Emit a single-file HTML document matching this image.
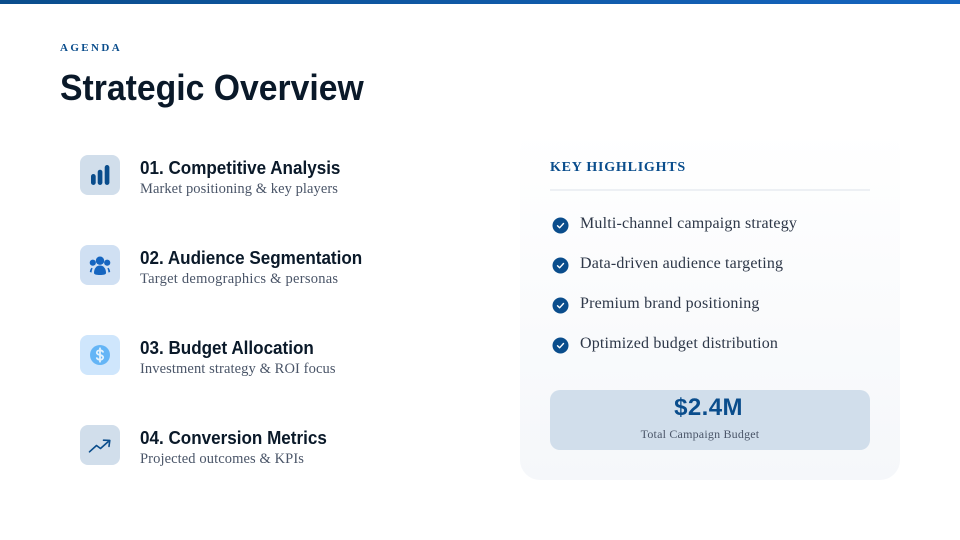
<!DOCTYPE html>
<html>
<head>
<meta charset="utf-8">
<style>
html,body{margin:0;padding:0;background:#fff}
#s{position:relative;width:960px;height:540px;overflow:hidden;background:#fff}
#s div{position:absolute;white-space:nowrap}
.sans{font-family:"Liberation Sans",sans-serif}
.serif{font-family:"Liberation Serif",serif}
.ic{left:80px;width:40px;height:40px;border-radius:8px}
.ic svg{position:absolute;left:0;top:0}
.t{left:140px;font-family:"Liberation Sans",sans-serif;font-weight:700;font-size:18px;line-height:22px;color:#0a1929;transform:scaleX(.948);transform-origin:0 0}
.d{left:140px;font-family:"Liberation Serif",serif;font-size:14.5px;line-height:18px;color:#4a5568}
.li{left:580px;font-family:"Liberation Serif",serif;font-size:16px;letter-spacing:.18px;line-height:20px;color:#2d3748}
.ck{left:552px;width:17px;height:17px}
</style>
</head>
<body>
<div id="s">
<div style="left:0;top:0;width:960px;height:4px;background:linear-gradient(90deg,#0a4d8c,#1565c0)"></div>
<div class="serif" style="left:60px;top:41px;font-size:11px;line-height:14px;font-weight:700;letter-spacing:2.4px;color:#0a4d8c">AGENDA</div>
<div class="sans" style="left:60px;top:66px;font-size:36px;line-height:44px;font-weight:700;color:#0a1929;transform:scaleX(.937);transform-origin:0 0">Strategic Overview</div>

<div class="ic" style="top:155px;background:#d1deeb"><svg width="40" height="40" viewBox="0 0 40 40"><g fill="#0a4d8c"><rect x="11" y="19" width="4.700" height="11" rx="2.350"/><rect x="17.700" y="14.700" width="4.700" height="15.300" rx="2.350"/><rect x="24.700" y="10" width="4.700" height="20" rx="2.350"/></g></svg></div>
<div class="t" style="top:157px">01. Competitive Analysis</div>
<div class="d" style="top:180px;letter-spacing:.07px">Market positioning &amp; key players</div>

<div class="ic" style="top:245px;background:#d0e0f3"><svg width="40" height="40" viewBox="0 0 40 40"><g fill="#1565c0"><circle cx="20" cy="15.700" r="4.200"/><circle cx="12.800" cy="17.700" r="3.100"/><circle cx="27.200" cy="17.700" r="3.100"/><path d="M14 28c0-4.500 2.500-7.500 6-7.500s6 3 6 7.500c0 1.500-2.500 2-6 2s-6-.5-6-2z"/><path d="M11.500 22.800c-1 1-1.500 2.500-1.700 4.200l1.800.5c.1-1.700.4-3 1.100-4z"/><path d="M28.500 22.800c1 1 1.500 2.500 1.700 4.200l-1.800.5c-.1-1.700-.4-3-1.100-4z"/></g></svg></div>
<div class="t" style="top:247px">02. Audience Segmentation</div>
<div class="d" style="top:270px;letter-spacing:.25px">Target demographics &amp; personas</div>

<div class="ic" style="top:335px;background:#cfe6fc"><svg width="40" height="40" viewBox="0 0 40 40"><circle cx="20" cy="20" r="10" fill="#64b5f6"/><path d="M23 16.800c-.6-1-1.700-1.500-3-1.500-1.800 0-3.200.9-3.200 2.300 0 3.200 6.400 1.600 6.400 4.800 0 1.400-1.400 2.300-3.200 2.300-1.400 0-2.600-.6-3.200-1.600M20 13.300v13.400" fill="none" stroke="#e3f2fd" stroke-width="1.800" stroke-linecap="round"/></svg></div>
<div class="t" style="top:337px">03. Budget Allocation</div>
<div class="d" style="top:360px;letter-spacing:.1px">Investment strategy &amp; ROI focus</div>

<div class="ic" style="top:425px;background:#d1deeb"><svg width="40" height="40" viewBox="0 0 40 40"><path d="M9.500 26.800 16.500 20.500l4 3 9-8M23.500 15.200l6.300.2-.8 6" fill="none" stroke="#0a4d8c" stroke-width="1.600" stroke-linecap="round" stroke-linejoin="round"/></svg></div>
<div class="t" style="top:427px">04. Conversion Metrics</div>
<div class="d" style="top:450px;letter-spacing:.1px">Projected outcomes &amp; KPIs</div>

<div style="left:520px;top:130px;width:380px;height:350px;border-radius:20px;background:linear-gradient(180deg,#ffffff 0%,#f5f7fa 100%)"></div>
<div class="serif" style="left:550px;top:159px;font-size:14px;line-height:18px;font-weight:700;letter-spacing:.77px;color:#0a4d8c">KEY HIGHLIGHTS</div>
<div style="left:550px;top:189px;width:320px;height:2px;background:#edf0f4"></div>

<div class="ck" style="top:217px"><svg width="17" height="17" viewBox="0 0 17 17"><circle cx="8.500" cy="8.500" r="8" fill="#0a4d8c"/><path d="M5.500 8.800 7.600 10.800 11.500 6.500" fill="none" stroke="#fff" stroke-width="1.400" stroke-linecap="round" stroke-linejoin="round"/></svg></div>
<div class="li" style="top:214px">Multi-channel campaign strategy</div>
<div class="ck" style="top:257px"><svg width="17" height="17" viewBox="0 0 17 17"><circle cx="8.500" cy="8.500" r="8" fill="#0a4d8c"/><path d="M5.500 8.800 7.600 10.800 11.500 6.500" fill="none" stroke="#fff" stroke-width="1.400" stroke-linecap="round" stroke-linejoin="round"/></svg></div>
<div class="li" style="top:254px">Data-driven audience targeting</div>
<div class="ck" style="top:297px"><svg width="17" height="17" viewBox="0 0 17 17"><circle cx="8.500" cy="8.500" r="8" fill="#0a4d8c"/><path d="M5.500 8.800 7.600 10.800 11.500 6.500" fill="none" stroke="#fff" stroke-width="1.400" stroke-linecap="round" stroke-linejoin="round"/></svg></div>
<div class="li" style="top:294px">Premium brand positioning</div>
<div class="ck" style="top:337px"><svg width="17" height="17" viewBox="0 0 17 17"><circle cx="8.500" cy="8.500" r="8" fill="#0a4d8c"/><path d="M5.500 8.800 7.600 10.800 11.500 6.500" fill="none" stroke="#fff" stroke-width="1.400" stroke-linecap="round" stroke-linejoin="round"/></svg></div>
<div class="li" style="top:334px">Optimized budget distribution</div>

<div style="left:550px;top:390px;width:320px;height:60px;border-radius:10px;background:#d1deeb"></div>
<div class="sans" style="left:550px;width:317px;text-align:center;top:393px;font-size:24px;line-height:30px;font-weight:700;letter-spacing:.4px;color:#0a4d8c">$2.4M</div>
<div class="serif" style="left:550px;width:300px;text-align:center;top:426px;font-size:12px;line-height:16px;letter-spacing:.2px;color:#4a5568">Total Campaign Budget</div>
</div>
</body>
</html>
